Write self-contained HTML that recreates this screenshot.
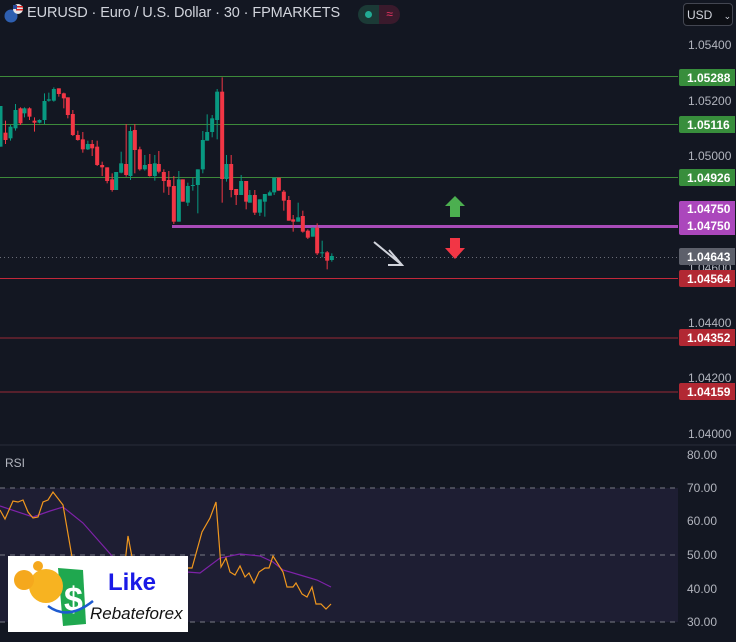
<!DOCTYPE html>
<html><head><meta charset="utf-8"><style>
html,body{margin:0;padding:0;background:#131722;width:736px;height:642px;overflow:hidden;font-family:"Liberation Sans",sans-serif}
svg{position:absolute;left:0;top:0}
.hdr{position:absolute;left:27px;top:5px;font-size:14.5px;color:#d1d4dc;letter-spacing:-0.1px}
.pill{position:absolute;left:358px;top:5px;width:42px;height:19px;border-radius:10px;overflow:hidden;display:flex}
.pill div{width:21px;height:19px}
.usd{position:absolute;left:683px;top:3px;width:50px;height:23px;border:1px solid #434651;border-radius:4px;background:#0d0f15;color:#d1d4dc;font-size:12px;box-sizing:border-box;padding:4px 0 0 3px}
.ax{position:absolute;left:688px;font-size:12px;color:#b2b5be}
.lb{position:absolute;left:679px;width:56px;height:17px;color:#fff;font-size:12px;font-weight:bold;box-sizing:border-box;padding:2px 0 0 8px;border-radius:2px 0 0 2px}
.rs{position:absolute;left:687px;font-size:12px;color:#b2b5be}
.logo{position:absolute;left:8px;top:556px;width:180px;height:76px;background:#fff}
</style></head><body>
<svg width="736" height="642" id="s">
<rect x="0" y="488" width="678" height="134" fill="#1e1e33"/>
<line x1="0" y1="445" x2="736" y2="445" stroke="#2a2e39" stroke-width="1"/>
<line x1="0" y1="76.5" x2="678" y2="76.5" stroke="#3d8a3a"/>
<line x1="0" y1="124.5" x2="678" y2="124.5" stroke="#3d8a3a"/>
<line x1="0" y1="177.5" x2="678" y2="177.5" stroke="#3d8a3a"/>
<line x1="0" y1="278.5" x2="678" y2="278.5" stroke="#c2283a"/>
<line x1="0" y1="338" x2="678" y2="338" stroke="#9a2a36"/>
<line x1="0" y1="392" x2="678" y2="392" stroke="#9a2a36"/>
<line x1="0" y1="257.5" x2="678" y2="257.5" stroke="#6a6d78" stroke-dasharray="1,3"/>
<line x1="172" y1="226.5" x2="678" y2="226.5" stroke="#a84bb8" stroke-width="3"/>
<line x1="0" y1="488" x2="678" y2="488" stroke="#787b86" stroke-dasharray="5,5"/>
<line x1="0" y1="555" x2="678" y2="555" stroke="#787b86" stroke-dasharray="5,5"/>
<line x1="0" y1="622" x2="678" y2="622" stroke="#787b86" stroke-dasharray="5,5"/>
<g id="c"></g>
<polyline fill="none" stroke="#7e22a8" stroke-width="1.2" points="0,506 33,517 50,511 63,507 83,523 113,557 150,570 187,572 200,573 220,558 240,554 260,556 273,562 283,570 300,575 317,580 331,587"/>
<polyline fill="none" stroke="#f0971e" stroke-width="1.2" points="0,510 5,519 13,501 18,502 23,500 28,512 33,518 38,517 43,502 48,500 53,492 63,505 72,557 90,570 110,575 124,572 128,536 132,557 150,575 170,575 188,568 192,568 202,532 210,518 216,502 221,567 226,558 230,572 235,575 240,566 245,577 249,573 254,583 259,572 265,568 269,568 273,556 283,572 287,587 293,587 296,583 302,594 307,597 312,587 316,604 321,604 326,609 331,604"/>
<path d="M455 196 L465 206 L460 206 L460 217 L450 217 L450 206 L445 206Z" fill="#4caf50"/>
<path d="M450 238 L460 238 L460 248 L465 248 L455 259 L445 248 L450 248Z" fill="#f23645"/>
<path d="M374 242 L402 265 M389 250 L402 265 L388 265" fill="none" stroke="#d1d4dc" stroke-width="2"/>
<circle cx="11" cy="16" r="6.5" fill="#2e5fb0"/>
<circle cx="18" cy="9" r="5" fill="#e8e8e8"/><rect x="16" y="6" width="7" height="1.5" fill="#d22"/><rect x="16" y="9" width="7" height="1.5" fill="#d22"/><rect x="13" y="5" width="4" height="4" fill="#2a4a9a"/>
</svg>
<div class="hdr">EURUSD · Euro / U.S. Dollar · 30 · FPMARKETS</div>
<div class="pill"><div style="background:#1b3a36;position:relative"><span style="position:absolute;left:7px;top:6px;width:7px;height:7px;border-radius:50%;background:#22ab94"></span></div><div style="background:#3a1a2c;color:#f23665;font-size:12px;text-align:center;line-height:19px">≈</div></div>
<div class="usd">USD <span style="font-size:9px;margin-left:8px">⌄</span></div>
<div class="ax" style="top:38px">1.05400</div>
<div class="ax" style="top:94px">1.05200</div>
<div class="ax" style="top:149px">1.05000</div>
<div class="ax" style="top:261px">1.04600</div>
<div class="ax" style="top:316px">1.04400</div>
<div class="ax" style="top:371px">1.04200</div>
<div class="ax" style="top:427px">1.04000</div>
<div class="lb" style="top:69px;background:#388e3c">1.05288</div>
<div class="lb" style="top:116px;background:#388e3c">1.05116</div>
<div class="lb" style="top:169px;background:#388e3c">1.04926</div>
<div class="lb" style="top:201px;height:34px;background:#ab47bc;line-height:17px;padding-top:0">1.04750<br>1.04750</div>
<div class="lb" style="top:248px;background:#5d606b">1.04643</div>
<div class="lb" style="top:270px;background:#b22833">1.04564</div>
<div class="lb" style="top:329px;background:#b22833">1.04352</div>
<div class="lb" style="top:383px;background:#b22833">1.04159</div>
<div class="rs" style="top:448px">80.00</div>
<div class="rs" style="top:481px">70.00</div>
<div class="rs" style="top:514px">60.00</div>
<div class="rs" style="top:548px">50.00</div>
<div class="rs" style="top:582px">40.00</div>
<div class="rs" style="top:615px">30.00</div>
<div style="position:absolute;left:5px;top:456px;font-size:12px;color:#b2b5be">RSI</div>
<div class="logo">
<svg width="180" height="76" style="position:absolute;left:0;top:0">
<path d="M50 12 L75 14 L78 68 L55 70Z" fill="#1fa84f"/>
<text x="56" y="55" font-size="34" font-weight="bold" fill="#fff" font-family="Liberation Sans">$</text>
<path d="M40 50 Q60 65 85 45" fill="none" stroke="#1e5bd0" stroke-width="2.5"/>
<circle cx="38" cy="30" r="17" fill="#f7b321"/>
<circle cx="16" cy="24" r="10" fill="#f5a81d"/>
<circle cx="30" cy="10" r="5" fill="#f5a81d"/>
<text x="100" y="34" font-size="24" font-weight="bold" fill="#1a1ae6" font-family="Liberation Sans">Like</text>
<text x="82" y="63" font-size="17" font-style="italic" fill="#111" font-family="Liberation Sans">Rebateforex</text>
</svg>
</div>
<script>
var d=[[0,318,440,318,440,1],[15,398,420,362,432,0],[30,380,415,375,422,1],[45,330,385,312,392,1],[60,325,370,322,375,0],[72,325,340,322,352,1],[87,325,350,322,360,0],[102,362,368,352,395,0],[117,360,368,358,370,1],[132,303,360,280,372,1],[145,298,302,278,305,1],[160,267,302,262,305,1],[175,265,282,265,290,0],[190,280,295,278,325,0],[202,292,345,292,355,0],[217,342,405,330,408,0],[232,405,420,392,422,0],[247,418,448,396,458,0],[262,432,448,422,450,1],[275,432,445,420,468,0],[290,440,495,422,498,0],[305,495,502,485,528,0],[320,502,543,502,550,0],[335,538,570,520,575,0],[347,516,570,516,570,1],[362,490,518,455,520,1],[377,492,525,372,530,0],[390,393,528,380,540,1],[403,390,450,372,520,0],[418,448,508,440,512,0],[433,495,508,465,512,1],[448,492,528,462,530,0],[463,490,528,465,542,1],[475,492,515,453,520,0],[490,516,543,508,578,0],[505,540,560,513,585,0],[520,558,665,528,672,0],[535,538,665,513,665,1],[547,538,605,538,605,0],[562,558,608,548,618,1],[577,555,557,532,572,1],[592,508,555,508,640,1],[607,420,508,393,520,1],[620,396,422,343,422,1],[635,355,396,345,412,1],[650,275,360,267,418,1],[665,275,537,232,608,0],[678,492,537,465,545,1],[692,492,570,465,592,0],[707,567,585,567,615,0],[722,543,585,525,585,1],[737,543,605,543,628,0],[748,585,608,570,608,1],[763,585,638,570,645,0],[778,598,638,598,648,1],[793,582,605,582,650,1],[808,577,587,572,587,1],[821,533,577,533,585,1],[835,533,572,533,572,0],[850,575,602,570,632,0],[865,600,662,588,662,0],[878,658,665,645,695,0],[893,652,665,608,665,1],[907,648,695,632,698,0],[922,692,713,688,717,0],[937,683,710,683,710,1],[950,683,760,670,765,0],[965,757,758,722,772,1],[980,757,782,753,808,0],[994,768,780,760,785,1]];
var g='';d.forEach(function(c){var x=c[0]/3,col=c[5]?'#089981':'#f23645';var t=Math.min(c[1],c[2])/3,b=Math.max(c[1],c[2])/3;
g+='<line x1="'+(x+0.5)+'" x2="'+(x+0.5)+'" y1="'+c[3]/3+'" y2="'+c[4]/3+'" stroke="'+col+'" stroke-width="1"/>';
g+='<rect x="'+(x-1.5)+'" y="'+t+'" width="4" height="'+Math.max(1,b-t)+'" fill="'+col+'"/>';});
document.getElementById('c').innerHTML=g;
</script>
</body></html>
